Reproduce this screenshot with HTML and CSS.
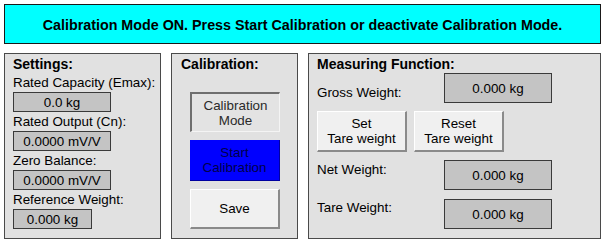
FILE: index.html
```html
<!DOCTYPE html>
<html>
<head>
<meta charset="utf-8">
<link rel="stylesheet" href="styles.css">
</head>
<body>
<div class="banner">Calibration Mode ON. Press Start Calibration or deactivate Calibration Mode.</div>
<div class="panels">
  <section class="panel settings">
    <div class="title">Settings:</div>
    <div class="label">Rated Capacity (Emax):</div>
    <div class="field wide">0.0 kg</div>
    <div class="label">Rated Output (Cn):</div>
    <div class="field wide">0.0000 mV/V</div>
    <div class="label">Zero Balance:</div>
    <div class="field wide">0.0000 mV/V</div>
    <div class="label">Reference Weight:</div>
    <div class="field narrow">0.000 kg</div>
  </section>
  <section class="panel calibration">
    <div class="title">Calibration:</div>
    <div class="btns">
      <div class="btn mode">Calibration<br>Mode</div>
      <div class="btn start">Start<br>Calibration</div>
      <div class="btn save">Save</div>
    </div>
  </section>
  <section class="panel measuring">
    <div class="title">Measuring Function:</div>
    <div class="row gross">
      <div class="label">Gross Weight:</div>
      <div class="field big">0.000 kg</div>
    </div>
    <div class="tare-btns">
      <div class="btn tare">Set<br>Tare weight</div>
      <div class="btn tare">Reset<br>Tare weight</div>
    </div>
    <div class="row net">
      <div class="label">Net Weight:</div>
      <div class="field big">0.000 kg</div>
    </div>
    <div class="row tarew">
      <div class="label">Tare Weight:</div>
      <div class="field big">0.000 kg</div>
    </div>
  </section>
</div>
</body>
</html>
```
FILE: styles.css
```css
html, body {
  margin: 0;
  padding: 0;
  background: #ffffff;
}
body {
  width: 605px;
  height: 240px;
  font-family: "Liberation Sans", Arial, sans-serif;
  font-size: 13.4px;
  color: #000;
  overflow: hidden;
}
.banner {
  margin: 4px 4px 0 4px;
  height: 37px;
  border: 1px solid #1a1a1a;
  background: #00ffff;
  font-weight: bold;
  font-size: 14.3px;
  display: flex;
  align-items: center;
  justify-content: center;
  padding-top: 1px;
  box-sizing: content-box;
}
.panels {
  display: flex;
  gap: 10px;
  margin: 9px 0 0 4px;
}
.panel {
  box-sizing: border-box;
  height: 186px;
  border: 1px solid #4a4a4a;
  background: #e1e1e1;
  padding-top: 1px;
}
.settings { width: 157px; padding-left: 8px; }
.calibration { width: 127px; padding-left: 9px; }
.measuring { width: 293px; padding-left: 8px; }
.title {
  font-weight: bold;
  font-size: 14px;
  line-height: 18px;
  height: 18px;
}
.label {
  line-height: 19px;
  height: 19px;
  white-space: nowrap;
}
.field {
  box-sizing: border-box;
  border: 1px solid #3a3a3a;
  background: #c4c4c4;
  display: flex;
  align-items: center;
  justify-content: center;
}
.settings .field { height: 20px; }
.wide { width: 98px; }
.narrow { width: 79px; }

.btns {
  display: flex;
  flex-direction: column;
  gap: 8px;
  margin: 19px 0 0 9px;
}
.btn {
  box-sizing: border-box;
  width: 90px;
  height: 40px;
  display: flex;
  align-items: center;
  justify-content: center;
  text-align: center;
  line-height: 15px;
}
.mode {
  background: #e3e3e3;
  border-top: 2px solid #6e6e6e;
  border-left: 2px solid #6e6e6e;
  border-right: 1px solid #f4f4f4;
  border-bottom: 1px solid #f4f4f4;
  color: #2a2a2a;
}
.start {
  background: #0000ff;
  color: #00004a;
  height: 41px;
  border-right: 1px solid #0000a0;
  border-bottom: 1px solid #0000a0;
}
.save, .tare {
  background: #f0f0f0;
  border-top: 1px solid #ffffff;
  border-left: 1px solid #ffffff;
  border-right: 2px solid #8a8a8a;
  border-bottom: 2px solid #8a8a8a;
}

.row {
  display: grid;
  grid-template-columns: 127px 108px;
}
.big { height: 30px; }
.gross .label { align-self: end; margin-bottom: 1px; }
.net { margin-top: 8px; }
.tarew { margin-top: 9px; }
.tarew .label { margin-top: -1px; }
.tare-btns {
  display: flex;
  gap: 7px;
  margin-top: 8px;
}
.tare { height: 41px; }
```
